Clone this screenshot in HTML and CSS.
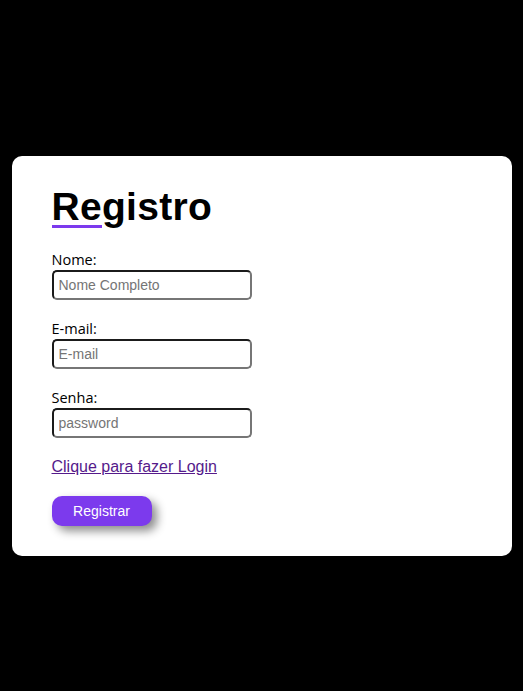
FILE: index.html
```html
<!DOCTYPE html>
<html lang="pt-BR">
<head>
<meta charset="utf-8">
<title>Registro</title>
<link rel="stylesheet" href="styles.css">
</head>
<body>
<main class="card">
  <h1 class="title">Registro</h1>
  <form class="form">
    <div class="field">
      <label class="label" for="nome">Nome:</label>
      <input class="input" id="nome" type="text" placeholder="Nome Completo">
    </div>
    <div class="field">
      <label class="label" for="email">E-mail:</label>
      <input class="input" id="email" type="email" placeholder="E-mail">
    </div>
    <div class="field">
      <label class="label" for="senha">Senha:</label>
      <input class="input" id="senha" type="password" placeholder="password">
    </div>
    <a class="link" href="#">Clique para fazer Login</a>
    <button class="button" type="button">Registrar</button>
  </form>
</main>
</body>
</html>
```

FILE: styles.css
```css
html, body {
  margin: 0;
  padding: 0;
  background: #000;
}
body {
  padding-top: 156px;
  min-height: 100vh;
  box-sizing: border-box;
}
.card {
  width: 500px;
  margin: 0 auto;
  background: #fff;
  border-radius: 10px;
  padding: 33px 40px 30px;
  box-sizing: border-box;
}
.title {
  margin: 0;
  font-family: "Liberation Sans", Arial, sans-serif;
  font-weight: bold;
  font-size: 39px;
  line-height: 36px;
  letter-spacing: 0.3px;
  color: #000;
}
.title::after {
  content: "";
  display: block;
  width: 50px;
  height: 3px;
  background: #7c3aed;
}
.form {
  display: flex;
  flex-direction: column;
  align-items: flex-start;
  margin-top: 22px;
}
.field {
  display: flex;
  flex-direction: column;
  align-items: flex-start;
  margin-bottom: 19px;
}
.label {
  font-family: "Open Sans", "Noto Sans", sans-serif;
  font-size: 14.5px;
  line-height: 20px;
  color: #000;
}
.input {
  width: 200px;
  height: 30px;
  box-sizing: border-box;
  padding: 0 5px;
  border: 2px solid;
  border-color: #1b1b1b #767676 #767676 #1b1b1b;
  border-radius: 5px;
  font-family: "Liberation Sans", Arial, sans-serif;
  font-size: 14px;
  background: #fff;
  outline: none;
}
.input::placeholder {
  color: #757575;
}
.link {
  font-family: "Liberation Sans", Arial, sans-serif;
  font-size: 16px;
  line-height: 18px;
  margin-top: 1px;
  color: #551a8b;
  text-decoration: underline;
}
.button {
  margin-top: 20px;
  width: 100px;
  height: 30px;
  border: none;
  border-radius: 10px;
  background: #7c3aed;
  color: #fff;
  font-family: "Liberation Sans", Arial, sans-serif;
  font-size: 14px;
  box-shadow: 5px 5px 10px rgba(0, 0, 0, 0.45);
  cursor: pointer;
}
```
